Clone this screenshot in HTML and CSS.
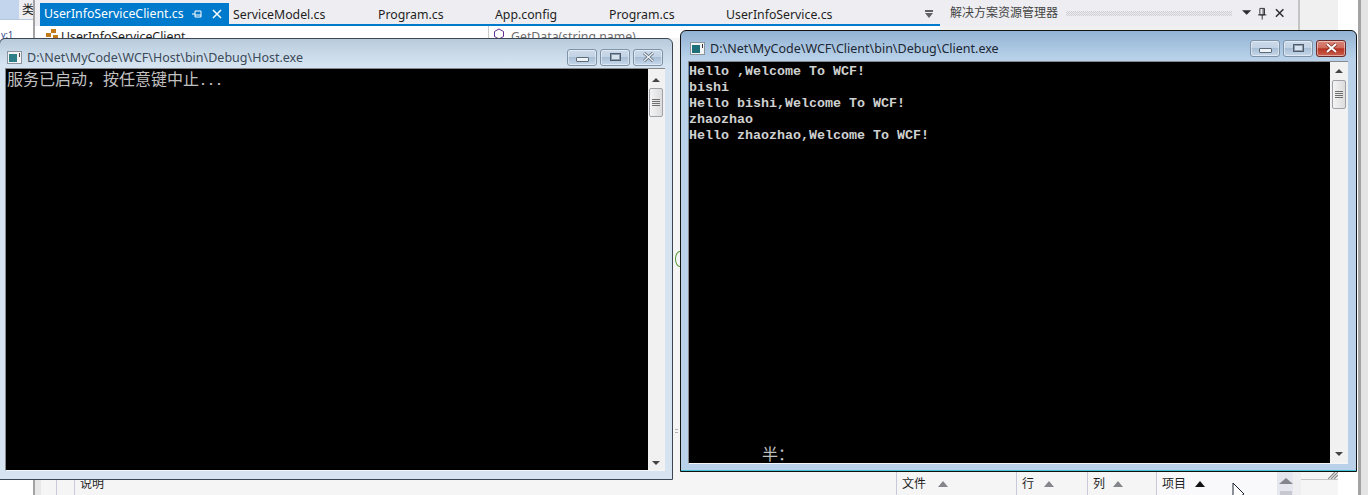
FILE: index.html
```html
<!DOCTYPE html>
<html lang="zh-CN">
<head>
<meta charset="utf-8">
<title>WCF</title>
<link rel="stylesheet" href="styles.css">
</head>
<body>
<div class="ide">
  <aside class="left">
    <div class="left-top"><span class="left-tab">类</span></div>
    <div class="left-body"><span class="left-frag">y:1</span></div>
  </aside>
  <main class="center">
    <div class="upper">
      <section class="editor">
        <div class="tabs">
          <div class="tab tab-active"><span class="tab-name">UserInfoServiceClient.cs</span>
            <svg class="tab-pin" width="10" height="10" viewBox="0 0 10 10"><path d="M0 5h3M3 2v6M3 2h6v6H3M3 6h6" fill="none" stroke="#fff"/></svg>
            <svg class="tab-x" width="10" height="10" viewBox="0 0 10 10"><path d="M1 1l8 8M9 1l-8 8" stroke="#fff" stroke-width="1.5"/></svg>
          </div>
          <div class="tab w145">ServiceModel.cs</div>
          <div class="tab w117">Program.cs</div>
          <div class="tab w114">App.config</div>
          <div class="tab w117">Program.cs</div>
          <div class="tab tab-last">UserInfoService.cs</div>
          <svg class="tab-menu" width="10" height="9" viewBox="0 0 10 9"><path d="M1 0h8v2H1zM1 3h8L5 8z" fill="#606065"/></svg>
        </div>
        <div class="navbar">
          <div class="nav-l">
            <svg width="16" height="12" viewBox="0 0 16 12"><path d="M1 5h5v4H1zM6 1h5v4H6zM8 7h5v4H8z" fill="#c27d1a"/></svg>
            <span class="nav-text">UserInfoServiceClient</span>
          </div>
          <div class="nav-r">
            <svg width="12" height="12" viewBox="0 0 12 12"><path d="M6 1l4.500 2.500v5L6 11 1.500 8.500v-5z" fill="none" stroke="#652d90"/></svg>
            <span class="nav-text nav-gray">GetData(string name)</span>
          </div>
        </div>
        <div class="editor-fill"><span class="margin-mark"></span><span class="split-dots"></span></div>
      </section>
      <section class="solution">
        <div class="sol-head">
          <span class="sol-title">解决方案资源管理器</span>
          <span class="sol-dots"></span>
          <svg width="10" height="6" viewBox="0 0 10 6"><path d="M0 0h10L5 5z" fill="#2d2d30"/></svg>
          <svg class="sol-pin" width="9" height="13" viewBox="0 0 9 13"><path d="M2 1h5v7H2zM0 8h9M4.500 8v5M5.500 1v7" fill="none" stroke="#2d2d30"/></svg>
          <svg class="sol-x" width="10" height="10" viewBox="0 0 10 10"><path d="M1 1l8 8M9 1l-8 8" stroke="#2d2d30" stroke-width="1.600"/></svg>
        </div>
      </section>
    </div>
    <div class="status">
      <div class="st-col w23"></div>
      <div class="st-col w18"></div>
      <div class="st-col w822"><span>说明</span></div>
      <div class="st-col w120"><span>文件</span><i class="tri"></i></div>
      <div class="st-col w71"><span>行</span><i class="tri"></i></div>
      <div class="st-col w69"><span>列</span><i class="tri"></i></div>
      <div class="st-col w120b"><span>项目</span><i class="tri tri-dark"></i>
        <svg class="cursor" width="13" height="13" viewBox="0 0 13 13"><path d="M1 0v18L12 11z" fill="#fff" stroke="#1a2030"/></svg>
      </div>
      <div class="st-scroll"><i class="tri tri-wide"></i><span class="st-thumb"></span></div>
      <div class="st-grip-col">
        <div class="st-grip-row"><svg width="10" height="7" viewBox="0 0 10 7"><path d="M0 7l7-7M3 7l7-7M6 7l4-4" stroke="#8a8a8a" stroke-width="1.200"/></svg></div>
      </div>
    </div>
  </main>
  <div class="gutter-white"></div>
  <div class="edge"></div>
</div>

<article class="win win-host">
  <header class="win-title">
    <svg class="win-icon" width="15" height="13" viewBox="0 0 15 13"><rect x=".5" y=".5" width="14" height="12" fill="#f4f4f4" stroke="#8a949e"/><rect x="2" y="3" width="8" height="8" fill="#2f7f8a"/><rect x="12" y="2" width="1" height="4" fill="#444"/></svg>
    <span class="win-name">D:\Net\MyCode\WCF\Host\bin\Debug\Host.exe</span>
    <div class="win-btns">
      <span class="wbtn"><i class="g-min"></i></span>
      <span class="wbtn"><i class="g-max"></i></span>
      <span class="wbtn">
        <svg width="13" height="10" viewBox="0 0 13 10"><path d="M2 1l9 8M11 1l-9 8" stroke="#5d6a77" stroke-width="3"/><path d="M2 1l9 8M11 1l-9 8" stroke="#eef3f8" stroke-width="1.400"/></svg>
      </span>
    </div>
  </header>
  <div class="win-body">
    <pre class="console cjk">服务已启动，按任意键中止<span class="mono-dots">...</span></pre>
    <div class="vscroll">
      <i class="arrow-up"></i>
      <span class="thumb"><i></i><i></i><i></i><i></i></span>
      <i class="arrow-down"></i>
    </div>
  </div>
</article>

<article class="win win-client">
  <header class="win-title">
    <svg class="win-icon" width="15" height="13" viewBox="0 0 15 13"><rect x=".5" y=".5" width="14" height="12" fill="#f4f4f4" stroke="#8a949e"/><rect x="2" y="3" width="8" height="8" fill="#1f6f7a"/><rect x="12" y="2" width="1" height="4" fill="#333"/></svg>
    <span class="win-name">D:\Net\MyCode\WCF\Client\bin\Debug\Client.exe</span>
    <div class="win-btns">
      <span class="wbtn"><i class="g-min"></i></span>
      <span class="wbtn"><i class="g-max"></i></span>
      <span class="wbtn wbtn-close">
        <svg width="15" height="10" viewBox="0 0 15 10"><path d="M3 1l9 8M12 1l-9 8" stroke="#7a2a20" stroke-width="3.400"/><path d="M3 1l9 8M12 1l-9 8" stroke="#fff" stroke-width="2"/></svg>
      </span>
    </div>
  </header>
  <div class="win-body">
    <div class="console client-out">
      <pre class="lines">Hello ,Welcome To WCF!
bishi
Hello bishi,Welcome To WCF!
zhaozhao
Hello zhaozhao,Welcome To WCF!</pre>
      <span class="ime cjk">半：</span>
    </div>
    <div class="vscroll">
      <i class="arrow-up"></i>
      <span class="thumb"><i></i><i></i><i></i><i></i></span>
      <i class="arrow-down"></i>
    </div>
  </div>
</article>
</body>
</html>
```
FILE: styles.css
```css
* { box-sizing: border-box; }
html, body { margin: 0; padding: 0; }
body {
  position: relative;
  width: 1368px;
  height: 495px;
  overflow: hidden;
  background: #fff;
  font-family: "Noto Sans", "Noto Sans CJK SC", sans-serif;
  color: #1e1e1e;
}
i { display: block; font-style: normal; }
pre { margin: 0; }

.ide { display: flex; width: 1368px; height: 495px; }

/* left pane */
.left { width: 33px; flex: none; display: flex; flex-direction: column; }
.left-top {
  height: 20px;
  display: flex;
  justify-content: flex-end;
  background: linear-gradient(90deg, #c3d5ec 0, #c3d5ec 19px, #eeeef2 19px);
  border-bottom: 1px solid #b9c9dd;
}
.left-tab { width: 11px; font-size: 12px; line-height: 20px; white-space: nowrap; overflow: hidden; }
.left-body { flex: 1; background: #fff; }
.left-frag { display: block; padding: 9px 0 0 1px; font-size: 9px; line-height: 12px; color: #2b3a8c; }

/* centre */
.center {
  width: 1305px;
  flex: none;
  display: flex;
  flex-direction: column;
  border-left: 2px solid #a3a3a3;
  background: #f0f0f0;
}
.upper { flex: 1; display: flex; min-height: 0; }
.editor { width: 905px; flex: none; display: flex; flex-direction: column; background: #f5f5f5; }
.tabs {
  height: 26px;
  padding: 3px 0 0 5px;
  display: flex;
  background: #eeeef2;
  position: relative;
}
.tabs::after {
  content: "";
  position: absolute;
  left: 5px; right: 0; bottom: 0;
  height: 2px;
  background: #007acc;
}
.tab {
  height: 21px;
  line-height: 22px;
  font-size: 12.3px;
  padding: 1px 0 0 4px;
  white-space: nowrap;
  flex: none;
}
.tab-active {
  width: 189px;
  padding-top: 0;
  background: #007acc;
  color: #fff;
  display: flex;
  align-items: center;
}
.tab-name { width: 150px; padding-top: 1px; }
.tab-pin { flex: none; margin-left: -2px; }
.tab-x { margin-left: 10px; flex: none; }
.w145 { width: 145px; }
.w117 { width: 117px; }
.w114 { width: 114px; }
.tab-last { width: 202px; }
.tab-menu { margin-top: 7px; flex: none; }

.navbar { height: 12px; display: flex; background: #fff; overflow: hidden; padding-left: 5px; }
.nav-l { width: 449px; display: flex; align-items: flex-start; padding: 2px 0 0 5px; border-right: 1px solid #ccc; }
.nav-r { flex: 1; display: flex; align-items: flex-start; gap: 6px; padding: 2px 0 0 4px; }
.nav-text { font-size: 12.3px; line-height: 18px; }
.nav-gray { color: #6d6d6d; }
.editor-fill { flex: 1; position: relative; }
.margin-mark {
  position: absolute; left: 640px; top: 213px;
  width: 10px; height: 16px;
  border: 1px solid #4f9a32;
  border-radius: 50%;
}
.split-dots {
  position: absolute; left: 640px; top: 391px;
  width: 3px; height: 6px;
  background: repeating-linear-gradient(180deg, #b0b0b0 0 1px, transparent 1px 3px);
}

.solution { width: 360px; flex: none; background: #f0f0f0; border-right: 2px solid #c4c4c4; }
.sol-head {
  height: 26px;
  display: flex;
  align-items: center;
  padding: 0 14px 0 10px;
  background: #eeeef2;
}
.sol-title { font-size: 12px; line-height: 26px; color: #444; white-space: nowrap; width: 116px; flex: none; }
.sol-dots {
  width: 166px; height: 5px; flex: none;
  margin-right: 10px;
  background: repeating-conic-gradient(#cdcdd2 0 25%, transparent 0 50%) 0 0 / 2px 2px;
}
.sol-pin { margin-left: 7px; }
.sol-x { margin-left: 8px; }

/* bottom list header */
.status { height: 23px; flex: none; display: flex; background: #f5f5f5; font-size: 12px; line-height: 23px; }
.st-col {
  flex: none;
  display: flex;
  align-items: flex-start;
  padding: 1px 0 0 5px;
  border-right: 1px solid #c9c9dc;
  position: relative;
}
.st-col span { white-space: nowrap; line-height: 22px; }
.w23 { width: 22px; background: linear-gradient(90deg, #e8e8e8 0 6px, #f5f5f5 6px); }
.w18 { width: 18px; }
.w822 { width: 822px; }
.w120 { width: 120px; }
.w71 { width: 71px; }
.w69 { width: 69px; }
.w120b { width: 120px; border-right: 0; background: #f9f9fb; }
.tri {
  width: 0; height: 0;
  border-left: 5px solid transparent;
  border-right: 5px solid transparent;
  border-bottom: 6px solid #85858c;
  margin: 8px 0 0 12px;
}
.w71 .tri { margin-left: 10px; }
.w69 .tri { margin-left: 8px; }
.w120b .tri-dark { border-bottom-color: #111; margin-left: 9px; }
.cursor { position: absolute; left: 75px; top: 11px; }
.st-scroll {
  width: 24px; flex: none;
  background: linear-gradient(90deg, #e6e6ee 0 16px, #efeff2 16px);
  display: flex;
  flex-direction: column;
  align-items: flex-start;
  padding-left: 2px;
}
.tri.tri-wide { border-left-width: 7px; border-right-width: 7px; border-bottom-width: 6px; margin: 6px 0 0; }
.st-thumb { width: 12px; height: 4px; background: #c8c8d0; margin: 7px 0 0 1px; }
.st-grip-col { flex: 1; }
.st-grip-row { height: 8px; border-bottom: 1px solid #c4c4c4; display: flex; justify-content: flex-end; }

.gutter-white { width: 20px; flex: none; background: #fff; }
.edge { flex: 1; background: #e4e4e4; border-left: 3px solid #a3a3a3; }

/* console windows */
.win {
  position: absolute;
  display: flex;
  flex-direction: column;
  border: 1px solid #3c4650;
  border-radius: 6px 6px 0 0;
}
.win-host {
  left: -1px; top: 38px;
  width: 674px; height: 442px;
  padding: 0 7px 8px 5px;
  background: linear-gradient(180deg, #b8cbdc 0, #d6e4f1 26px);
}
.win-client {
  left: 680px; top: 30px;
  width: 677px; height: 442px;
  padding: 0 8px 7px 7px;
  background: linear-gradient(180deg, #93b3d3 0, #b9d2ea 28px);
  border-color: #111;
  box-shadow: inset 0 -1px 0 #3fc4d8;
}
.win-title { height: 29px; flex: none; display: flex; align-items: center; padding-top: 7px; }
.win-client .win-title { height: 30px; padding-top: 4px; }
.win-icon { margin: 0 5px 0 2px; flex: none; }
.win-name { flex: 1; font-size: 12.5px; color: #3b4a58; white-space: nowrap; }
.win-client .win-name { color: #1c2733; }
.win-btns { display: flex; gap: 3px; margin-right: 2px; }
.wbtn {
  width: 30px; height: 17px;
  border: 1px solid #7f93a8;
  border-radius: 3px;
  display: flex;
  align-items: center;
  justify-content: center;
  background: linear-gradient(180deg, #ccdaea 0, #c2d3e5 45%, #a9bfd6 50%, #c7d8ea 100%);
  box-shadow: inset 0 0 0 1px rgba(255,255,255,.45);
}
.wbtn-close {
  border-color: #6a2a28;
  background: linear-gradient(180deg, #d9877b 0, #cf6a5c 45%, #b83222 52%, #c9604e 100%);
}
.g-min { width: 13px; height: 5px; background: #eef3f8; border: 1px solid #5d6a77; border-radius: 1px; margin-top: 4px; }
.g-max { width: 11px; height: 8px; background: #d6e2ee; border: 1px solid #4d5d6e; box-shadow: inset 0 0 0 1px #8e9cab; }

.win-body {
  flex: 1;
  min-height: 0;
  display: flex;
  border-top: 1px solid #85898e;
  border-left: 1px solid #85898e;
  border-bottom: 1px solid #f4f7fa;
}
.console {
  flex: 1;
  background: #000;
  color: #c0c0c0;
  position: relative;
  overflow: hidden;
}
.cjk {
  font-family: "Noto Sans CJK SC", "Noto Sans", sans-serif;
  font-size: 16px;
  line-height: 18px;
  font-weight: 400;
}
pre.console { padding: 0 0 0 1px; font-family: "Noto Sans CJK SC", "Liberation Mono", monospace; }
.mono-dots { font-family: "Liberation Mono", monospace; font-size: 13.33px; font-weight: 700; }
.client-out { padding-top: 2px; }
.lines {
  font-family: "Liberation Mono", monospace;
  font-weight: 700;
  font-size: 13.33px;
  line-height: 16px;
  color: #d0d0d0;
}
.ime { position: absolute; left: 73px; bottom: 1px; }

.vscroll {
  width: 17px; flex: none;
  background: #f1f1f1;
  display: flex;
  flex-direction: column;
  align-items: center;
  justify-content: space-between;
  padding: 9px 2px 5px 1px;
}
.win-client .vscroll { width: 18px; padding: 7px 2px 7px 2px; }
.arrow-up, .arrow-down { width: 0; height: 0; border-left: 4px solid transparent; border-right: 4px solid transparent; }
.arrow-up { border-bottom: 4px solid #444; }
.arrow-down { border-top: 4px solid #444; }
.thumb {
  width: 14px; height: 29px;
  margin: 6px 0 auto;
  border: 1px solid #9ea2a6;
  border-radius: 2px;
  background: linear-gradient(90deg, #f4f4f4, #dcdcdc);
  display: flex;
  flex-direction: column;
  justify-content: center;
  align-items: center;
  gap: 1px;
}
.win-client .thumb { margin-top: 7px; }
.thumb i { width: 8px; height: 1px; background: #6f6f6f; }
```
